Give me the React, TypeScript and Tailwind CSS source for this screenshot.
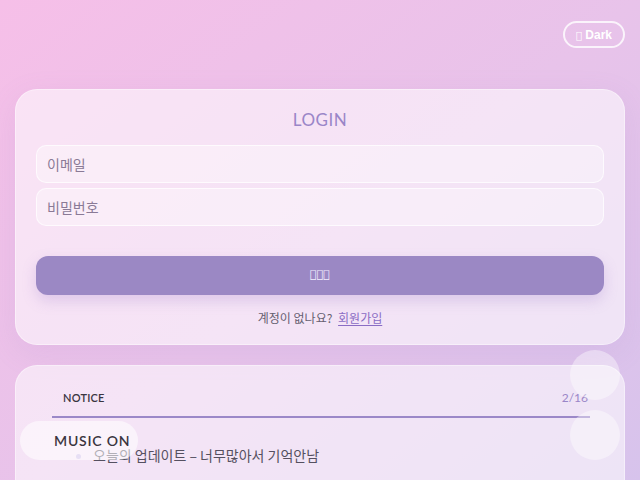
import { useState } from 'react';

const notices = ['오늘의 업데이트 – 너무많아서 기억안남'];

function LoginCard() {
  const [email, setEmail] = useState('');
  const [password, setPassword] = useState('');

  return (
    <div className="rounded-[22px] bg-white/55 border border-white/40 px-5 pt-[18px] pb-[17px] shadow-[0_8px_30px_rgba(160,120,200,0.12)]">
      {/* Title */}
      <h2 className="text-center text-[17px] tracking-[0.5px] text-[#9a86c8] font-['Lato',sans-serif] leading-6">
        LOGIN
      </h2>

      {/* Inputs */}
      <div className="mt-[13px] flex flex-col gap-[5px]">
        <input
          value={email}
          onChange={e => setEmail(e.target.value)}
          placeholder="이메일"
          className="h-[38px] w-full rounded-[10px] border border-white/70 bg-white/35 px-[10px] text-[14px] text-[#6b5c7a] placeholder:text-[#8a7a96] outline-none"
        />
        <input
          type="password"
          value={password}
          onChange={e => setPassword(e.target.value)}
          placeholder="비밀번호"
          className="h-[38px] w-full rounded-[10px] border border-white/70 bg-white/35 px-[10px] text-[14px] text-[#6b5c7a] placeholder:text-[#8a7a96] outline-none"
        />
      </div>

      {/* Submit */}
      <button className="mt-[30px] h-[39px] w-full rounded-[12px] bg-[#9b88c4] text-[11px] text-[#f3eeff] shadow-[0_6px_14px_rgba(150,120,200,0.25)] font-['DejaVu_Sans',sans-serif]">
        {'\uE000\uE001\uE002'}
      </button>

      <p className="mt-[14px] text-center text-[12px] text-[#666070]">
        계정이 없나요?{' '}
        <a href="#" className="ml-[3px] text-[#8a6cc4] underline underline-offset-2">회원가입</a>
      </p>
    </div>
  );
}

function NoticeCard() {
  return (
    <div className="mt-5 rounded-[22px] bg-white/55 border border-white/40 pl-9 pr-[34px] pt-[23px] pb-10">
      <div className="flex items-center justify-between border-b-2 border-[#9b88c8] pl-[11px] pr-[2px] pb-[9px]">
        <span className="text-[11px] font-semibold tracking-[0.2px] text-[#3a3540] font-['Lato',sans-serif]">NOTICE</span>
        <span className="text-[12px] text-[#9a86c8] font-['Lato',sans-serif]">2/16</span>
      </div>
      <ul className="mt-[27px] list-disc pl-[41px] text-[14px] text-[#555060] marker:text-[#c9b8e8]">
        {notices.map(n => (
          <li key={n}>{n}</li>
        ))}
      </ul>
    </div>
  );
}

export default function App() {
  return (
    <div className="relative min-h-[480px] w-full overflow-hidden bg-gradient-to-br from-[#f6bfe8] via-[#e8c3ea] to-[#d6c3ec] font-['Noto_Sans_CJK_KR','Noto_Sans',sans-serif]">
      {/* Theme toggle */}
      <div className="flex justify-end px-[15px] pt-[21px]">
        <button className="h-[27px] rounded-full border-2 border-white/80 px-[11px] text-[12px] font-bold text-white font-['Liberation_Sans',sans-serif]">
          <span className="text-[10px] font-normal font-['DejaVu_Sans',sans-serif]">{'\uE000'}</span> Dark
        </button>
      </div>

      <div className="px-[15px] pt-[41px]">
        <LoginCard />
        <NoticeCard />
      </div>

      {/* Music toggle */}
      <div className="absolute left-[20px] top-[421px] flex h-[39px] w-[118px] items-center rounded-full bg-white/55 pl-[34px] text-[14px] font-semibold tracking-[0.8px] text-[#3a3540] font-['Lato',sans-serif]">
        MUSIC ON
      </div>

      {/* Floating round buttons */}
      <div className="absolute right-[20px] top-[350px] h-[50px] w-[50px] rounded-full bg-white/40" />
      <div className="absolute right-[20px] top-[410px] h-[50px] w-[50px] rounded-full bg-white/40" />
    </div>
  );
}
